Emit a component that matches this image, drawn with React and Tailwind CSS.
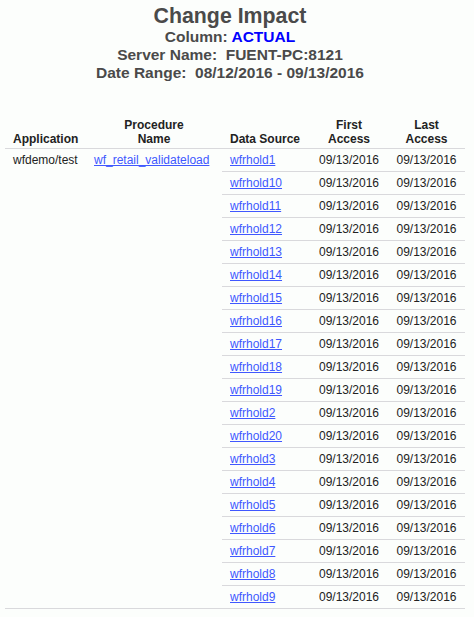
const SOURCES = [
  'wfrhold1', 'wfrhold10', 'wfrhold11', 'wfrhold12', 'wfrhold13', 'wfrhold14', 'wfrhold15',
  'wfrhold16', 'wfrhold17', 'wfrhold18', 'wfrhold19', 'wfrhold2', 'wfrhold20', 'wfrhold3',
  'wfrhold4', 'wfrhold5', 'wfrhold6', 'wfrhold7', 'wfrhold8', 'wfrhold9',
]

const LINK = 'text-[#4058ff] underline'
const CELL = 'h-[23px] px-2 py-0 align-middle border-t border-[#d9d9dc]'

export default function App() {
  return (
    <div className="min-h-[617px] bg-[#fcfefc] text-[#222] font-['Liberation_Sans',Arial,sans-serif]">
      <div className="w-[460px] pt-[4px] text-center font-bold text-[#4a4a4a]">
        <h1 className="text-[21.33px] leading-[24px]">Change Impact</h1>
        <div className="text-[15.5px] leading-[18px]">
          <p>
            Column: <span className="text-[#0000ff]">ACTUAL</span>
          </p>
          <p className="whitespace-pre">Server Name:  FUENT-PC:8121</p>
          <p className="whitespace-pre">Date Range:  08/12/2016 - 09/13/2016</p>
        </div>
      </div>

      <table className="ml-[5px] mt-[34px] w-[460px] table-fixed border-collapse border-b border-[#d9d9dc] text-[12px] leading-[14px]">
        <colgroup>
          <col className="w-[81px]" />
          <col className="w-[136px]" />
          <col className="w-[88px]" />
          <col className="w-[78px]" />
          <col className="w-[77px]" />
        </colgroup>
        <thead>
          <tr className="font-bold text-[#222]">
            <th className="px-2 pt-[2px] pb-[2px] align-bottom text-left border-b border-[#d9d9dc]">Application</th>
            <th className="px-2 pt-[2px] pb-[2px] align-bottom text-center border-b border-[#d9d9dc]">Procedure<br />Name</th>
            <th className="px-2 pt-[2px] pb-[2px] align-bottom text-left border-b border-[#d9d9dc]">Data Source</th>
            <th className="px-2 pt-[2px] pb-[2px] align-bottom text-center border-b border-[#d9d9dc]">First<br />Access</th>
            <th className="px-2 pt-[2px] pb-[2px] align-bottom text-center border-b border-[#d9d9dc]">Last<br />Access</th>
          </tr>
        </thead>
        <tbody>
          {SOURCES.map((src, i) => (
            <tr key={src}>
              {i === 0 && (
                <>
                  <td rowSpan={SOURCES.length} className="px-2 pt-[4px] align-top whitespace-nowrap">wfdemo/test</td>
                  <td rowSpan={SOURCES.length} className="px-2 pt-[4px] align-top whitespace-nowrap">
                    <a href="#" className={LINK}>wf_retail_validateload</a>
                  </td>
                </>
              )}
              <td className={CELL}>
                <a href="#" className={LINK}>{src}</a>
              </td>
              <td className={`${CELL} text-center`}>09/13/2016</td>
              <td className={`${CELL} text-center`}>09/13/2016</td>
            </tr>
          ))}
        </tbody>
      </table>
    </div>
  )
}
